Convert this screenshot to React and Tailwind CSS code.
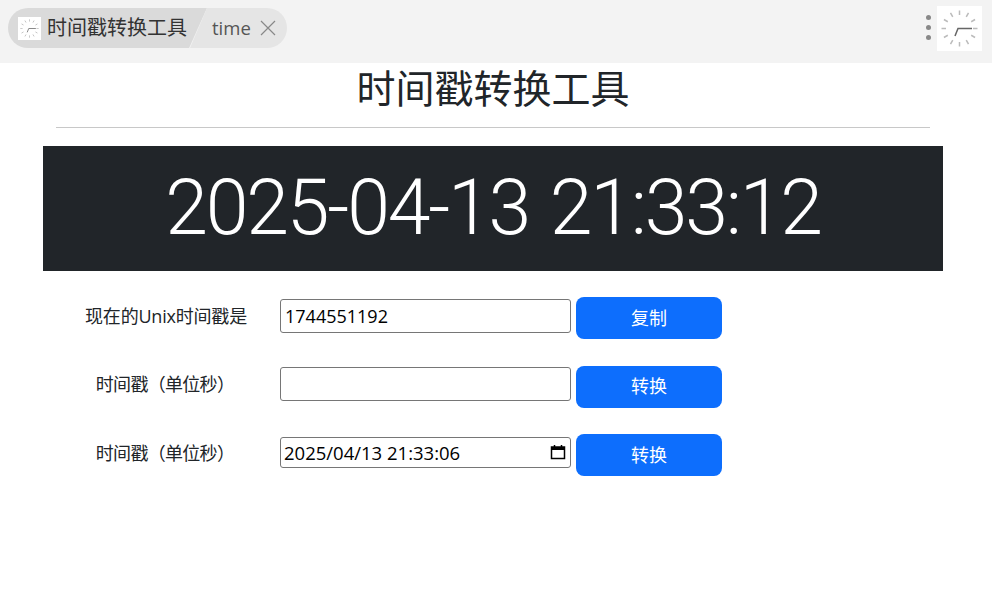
const FONT = "font-['Open_Sans','Noto_Sans_CJK_SC',sans-serif]";

// clock favicon, used in the tab and on the right of the bar
const ClockIcon = ({ className }) => {
  const ticks = Array.from({ length: 12 }, (_, i) => i * 30);
  return (
    <svg viewBox="0 0 45 45" className={className}>
      <rect width="45" height="45" fill="#fff" />
      {ticks.map((a) => (
        <line
          key={a}
          x1="22.5"
          y1="4.5"
          x2="22.5"
          y2="9"
          stroke="#bbb"
          strokeWidth="1.5"
          transform={`rotate(${a} 22.5 22.5)`}
        />
      ))}
      <path d="M35 22.5H21L18 30" fill="none" stroke="#666" strokeWidth="1.5" />
    </svg>
  );
};

const Row = ({ label, value, button, inputClass = 'h-[34px] text-[18px] pl-[4px]', wrapClass = 'mb-1', labelClass = '', date }) => (
  <div className="flex items-center h-[42px]">
    <div className={`w-[220px] mb-1 text-center text-[18px] text-[#212529] whitespace-nowrap ${labelClass}`}>{label}</div>
    <div className={`relative ml-1 w-[291px] ${wrapClass}`}>
      <input
        type="text"
        readOnly
        value={value}
        className={`block w-full ${inputClass} border border-[#767676] rounded-[3px] bg-white text-black outline-none`}
      />
      {date && (
        <svg viewBox="0 0 16 16" className="absolute right-[5px] top-[7px] w-4 h-4">
          <path d="M1.5 3h13v11.5h-13z" fill="none" stroke="#000" strokeWidth="1.5" />
          <path d="M1.5 3h13v3h-13z" fill="#000" />
          <path d="M4.5 1v2M11.5 1v2" stroke="#000" strokeWidth="1.5" />
        </svg>
      )}
    </div>
    <button className="ml-[5px] w-[146px] h-[42px] rounded-lg bg-[#0d6efd] text-white text-[18px]">
      {button}
    </button>
  </div>
);

export default function App() {
  return (
    <div className={`min-h-screen bg-white ${FONT}`}>
      <div className="flex items-start justify-between h-[63px] bg-[#f3f3f3] pl-2 pr-[10px]">
        <div className="flex mt-2 h-10 w-[279px] rounded-full overflow-hidden">
          <div className="flex items-center w-[199px] pl-[10px] bg-[#dadada] [clip-path:polygon(0_0,100%_0,91%_100%,0_100%)]">
            <ClockIcon className="w-[23px] h-[23px]" />
            <span className="ml-[6px] text-[20px] text-[#333] whitespace-nowrap">时间戳转换工具</span>
          </div>
          <div className="flex items-center flex-1 -ml-[17px] pl-[22px] bg-[#e5e5e5] [clip-path:polygon(17px_0,100%_0,100%_100%,0_100%)]">
            <span className="text-[18.5px] text-[#555]">time</span>
            <svg viewBox="0 0 16 16" className="ml-[9px] w-4 h-4">
              <path d="M1 1l14 14M15 1L1 15" stroke="#888" strokeWidth="1.2" />
            </svg>
          </div>
        </div>
        <div className="flex items-center gap-[6px] mt-[6px]">
          <div className="flex flex-col gap-[5px] mb-[3px]">
            <span className="w-[5px] h-[5px] rounded-full bg-[#888]" />
            <span className="w-[5px] h-[5px] rounded-full bg-[#888]" />
            <span className="w-[5px] h-[5px] rounded-full bg-[#888]" />
          </div>
          <ClockIcon className="w-[45px] h-[45px]" />
        </div>
      </div>

      <div className="w-[900px] ml-[43px]">
        <div className="px-[13px]">
          <h1 className="h-[64px] text-center text-[39px] leading-[50px] font-normal text-[#212529]">时间戳转换工具</h1>
          <hr className="border-t border-[#c8c8c8]" />
        </div>
        <div className="mt-[18px] h-[125px] flex items-center justify-center bg-[#212529] text-white text-[77px] tracking-[-2.2px] [word-spacing:4px] font-light font-['Roboto',sans-serif] whitespace-pre">
          2025-04-13 21:33:12
        </div>
        <div className="mt-[26px] px-[13px] flex flex-col gap-[26.5px]">
          <Row label="现在的Unix时间戳是" labelClass="tracking-[-0.2px]" value="1744551192" button="复制" />
          <Row label="时间戳（单位秒）" labelClass="tracking-[-0.7px] pr-[2px]" wrapClass="mb-[5px]" value="" button="转换" />
          <Row
            label="时间戳（单位秒）"
            labelClass="tracking-[-0.7px] pr-[2px]"
            wrapClass="mb-[5px]"
            value="2025/04/13 21:33:06"
            button="转换"
            inputClass="h-[31px] text-[18.5px] pl-[3px]"
            date
          />
        </div>
      </div>
    </div>
  );
}
